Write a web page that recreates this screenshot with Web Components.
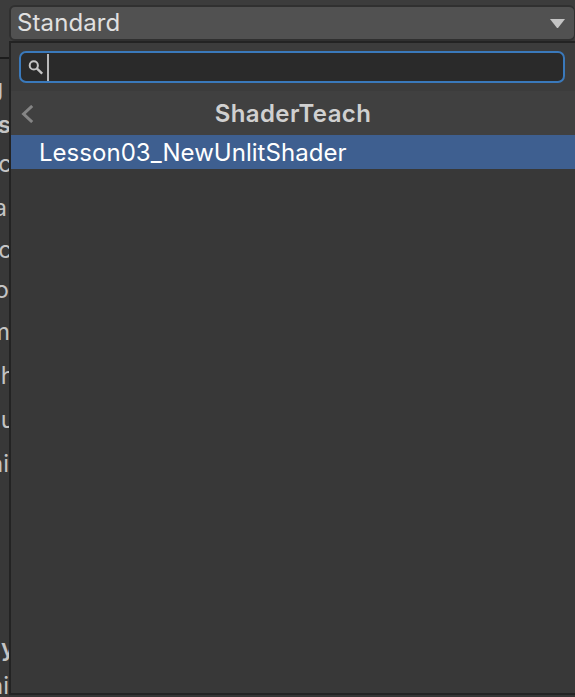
<!DOCTYPE html>
<html lang="en">
<head>
<meta charset="utf-8">
<title>Shader picker</title>
<style>
html,body{margin:0;height:100%;background:#383838;overflow:hidden}
</style>
</head>
<body>
<shader-window></shader-window>
<script>
const define = (name, html) => customElements.define(name, class extends HTMLElement {
  constructor() {
    super();
    this.attachShadow({mode: 'open'}).innerHTML = html;
  }
});

// One partly covered inspector label; --h is the row height, --x the shift of its text.
define('inspector-label', `<style>
:host{display:flex;align-items:flex-end;justify-content:flex-end;box-sizing:border-box;height:var(--h,42px);overflow:hidden;color:#c4c4c4;line-height:30px;white-space:nowrap}
:host([bold]){font-weight:600}
span{margin-right:var(--x,0px)}
</style><span><slot></slot></span>`);

define('inspector-strip', `<style>
:host{display:block;width:9px;overflow:hidden;background:#383838}
.head{height:57px;background:#3c3c3c;border-bottom:2px solid #1c1c1c}
</style><div class="head"></div><slot></slot>`);

define('drop-down', `<style>
:host{display:flex;align-items:center;justify-content:space-between;box-sizing:border-box;height:36px;padding:0 9px 0 6px;border:2px solid #303030;border-right-width:1px;border-radius:6px;background:#515151;color:#e0e0e0;line-height:32px}
span{letter-spacing:var(--track)}
svg{display:block}
</style><span><slot></slot></span><svg width="15" height="9" viewBox="0 0 15 9"><path d="M0 0h15L8 9H7z" fill="#c4c4c4"/></svg>`);

define('search-field', `<style>
:host{display:flex;align-items:center;box-sizing:border-box;height:32px;padding-left:7px;border:2px solid #3a79bb;border-radius:7px;background:#2a2a2a}
i{width:2px;height:27px;margin-left:3px;background:#b8b8b8}
svg{display:block;margin-top:2px}
</style><svg width="16" height="16" viewBox="0 0 16 16" fill="none" stroke="#c4c4c4"><circle cx="5.8" cy="5.4" r="4.1" stroke-width="2"/><path d="M8.8 8.4l5.4 5.2" stroke-width="2.4"/></svg><i></i>`);

define('menu-header', `<style>
:host{display:grid;grid-template-columns:20px 1fr 20px;align-items:center;height:44px;padding:0 10px;background:#404040;color:#d0d0d0;font-weight:600;text-align:center}
span{letter-spacing:var(--track);line-height:44px;padding-top:2px;height:42px;line-height:42px}
svg{display:block;margin-top:2px}
</style><svg width="14" height="18" viewBox="0 0 14 18"><path d="M11.2 1L2.6 9l8.6 8" fill="none" stroke="#858585" stroke-width="3"/></svg><span><slot></slot></span>`);

define('menu-item', `<style>
:host{display:block;height:34px;padding-left:28px;background:#3e5f90;color:#fff;line-height:35px}
span{letter-spacing:var(--track)}
</style><span><slot></slot></span>`);

define('menu-panel', `<style>
:host{display:flex;flex-direction:column;box-sizing:border-box;flex:1;border:2px solid #232323;border-right:0;background:#383838}
.search{height:48px;box-sizing:border-box;padding:8px 10px 8px 8px;background:#3c3c3c}
</style><div class="search"><search-field></search-field></div><slot></slot>`);

define('shader-window', `<style>
:host{display:grid;grid-template-columns:9px 1fr;height:697px;background:#3c3c3c;font:24px Inter,"Liberation Sans",sans-serif}
main{display:flex;flex-direction:column;min-width:0}
.top{height:5px}
.bottom{height:2px;background:#353535}
</style>
<inspector-strip>
<inspector-label bold style="--h:44px;--x:6px">g</inspector-label>
<inspector-label bold style="--h:37px;--x:-2px">os</inspector-label>
<inspector-label style="--h:39px;--x:-3px">c</inspector-label>
<inspector-label style="--h:44px;--x:2px">a</inspector-label>
<inspector-label style="--h:42px;--x:-3px">c</inspector-label>
<inspector-label style="--h:40px;--x:0px">o</inspector-label>
<inspector-label style="--h:42px;--x:-1px">m</inspector-label>
<inspector-label style="--h:44px;--x:-6px">h</inspector-label>
<inspector-label style="--h:44px;--x:-6px">u</inspector-label>
<inspector-label style="--h:44px;--x:0px">ni</inspector-label>
<inspector-label bold style="--h:184px;--x:-6px">y</inspector-label>
<inspector-label style="--h:38px;--x:0px">ni</inspector-label>
</inspector-strip>
<main>
<div class="top"></div>
<drop-down style="--track:.1px">Standard</drop-down>
<menu-panel>
<menu-header style="--track:.4px">ShaderTeach</menu-header>
<menu-item style="--track:.03px">Lesson03_NewUnlitShader</menu-item>
</menu-panel>
<div class="bottom"></div>
</main>`);
</script>
</body>
</html>
